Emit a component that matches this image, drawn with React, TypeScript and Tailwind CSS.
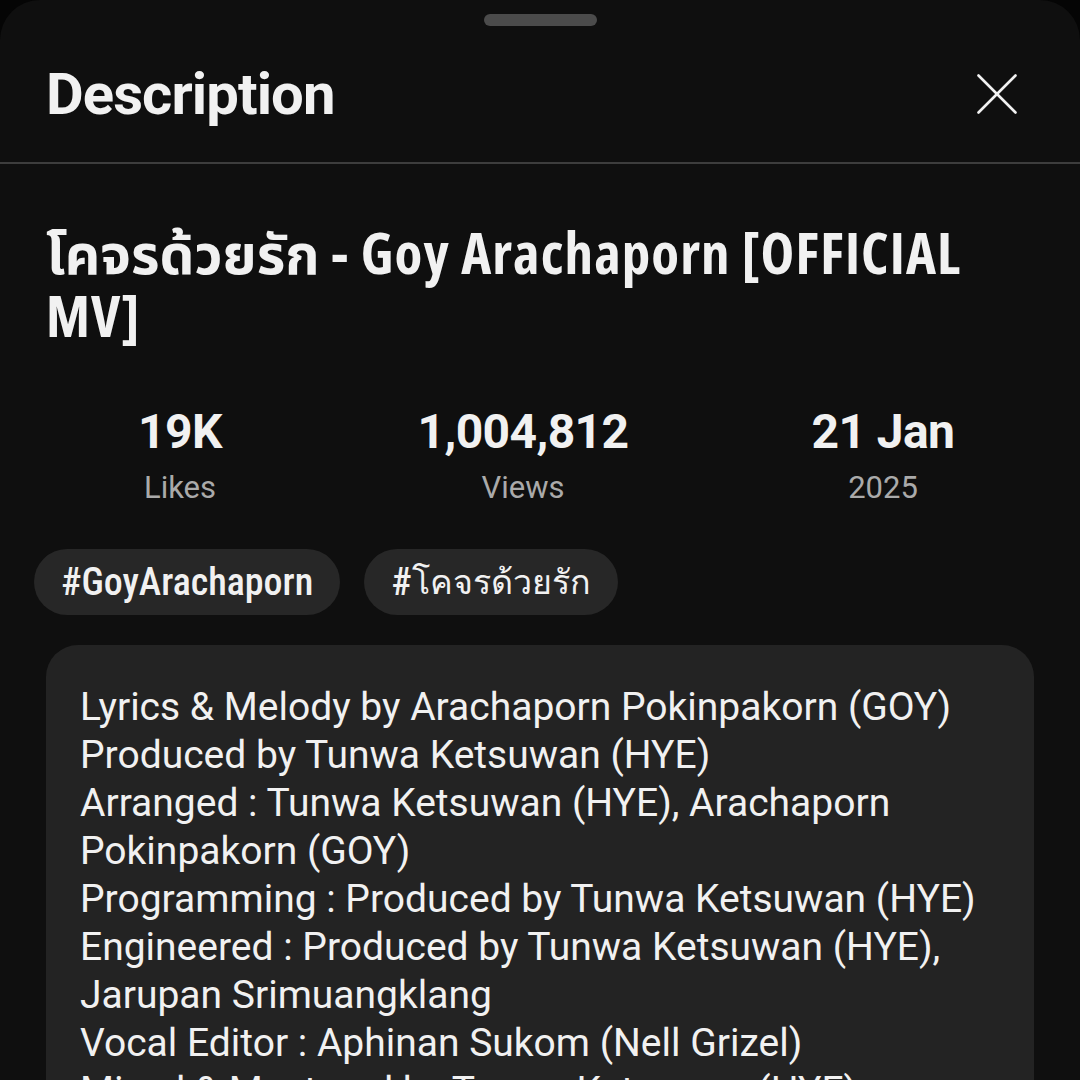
import React from 'react';

const stats = [
  { value: '19K', label: 'Likes' },
  { value: '1,004,812', label: 'Views' },
  { value: '21 Jan', label: '2025' },
];

const credits = [
  'Lyrics & Melody by Arachaporn Pokinpakorn (GOY)',
  'Produced by Tunwa Ketsuwan (HYE)',
  'Arranged : Tunwa Ketsuwan (HYE), Arachaporn Pokinpakorn (GOY)',
  'Programming : Produced by Tunwa Ketsuwan (HYE)',
  'Engineered : Produced by Tunwa Ketsuwan (HYE), Jarupan Srimuangklang',
  'Vocal Editor : Aphinan Sukom (Nell Grizel)',
  'Mixed & Mastered by Tunwa Ketsuwan (HYE)',
];

function Chip({ children }: { children: React.ReactNode }) {
  return (
    <span className="h-[66px] flex items-center px-[27px] rounded-full bg-[#272727] text-[38px] font-medium font-stretch-condensed">
      {children}
    </span>
  );
}

export default function App() {
  return (
    <div className="w-[1080px] h-[1080px] overflow-hidden bg-[#050505] font-['Roboto','Noto_Sans',sans-serif] text-[#f1f1f1]">
      <div className="h-full rounded-t-[40px] bg-[#0f0f0f]">
        {/* Drag handle */}
        <div className="flex justify-center pt-[14px]">
          <div className="w-[113px] h-[12px] rounded-full bg-[#4b4b4b]" />
        </div>

        {/* Header */}
        <div className="flex items-center justify-between h-[136px] px-[46px]">
          <h1 className="text-[58px] leading-none font-bold tracking-[-0.9px]">Description</h1>
          <button className="mr-[17px]">
            <svg width="40" height="40" viewBox="0 0 40 40" stroke="#f1f1f1" strokeWidth="2.6" strokeLinecap="round">
              <line x1="1.5" y1="1.5" x2="38.5" y2="38.5" />
              <line x1="38.5" y1="1.5" x2="1.5" y2="38.5" />
            </svg>
          </button>
        </div>
        <div className="h-[2px] bg-[#3d3d3d]" />

        {/* Title */}
        <h2 className="h-[183px] pl-[46px] pr-[70px] pt-[57px] text-[57px] leading-[63px] font-bold tracking-[1.1px] font-stretch-[84%] font-['Open_Sans','Noto_Sans',sans-serif]">
          <span className="text-[55px] leading-[0] tracking-normal font-stretch-normal font-['Noto_Sans_Thai','Noto_Sans',sans-serif]">โคจรด้วยรัก</span> - Goy Arachaporn [OFFICIAL MV]
        </h2>

        {/* Stats */}
        <div className="grid grid-cols-[360px_326px_1fr] mt-[57px]">
          {stats.map((s) => (
            <div key={s.label} className="flex flex-col items-center">
              <span className="text-[48px] leading-[56px] font-bold tracking-[-0.6px]">{s.value}</span>
              <span className="text-[31px] leading-[36px] mt-[10px] text-[#aaaaaa]">{s.label}</span>
            </div>
          ))}
        </div>

        {/* Hashtags */}
        <div className="flex gap-[24px] px-[34px] mt-[43px]">
          <Chip>#GoyArachaporn</Chip>
          <Chip>
            #<span className="text-[34px] font-normal">โคจรด้วยรัก</span>
          </Chip>
        </div>

        {/* Description body */}
        <div className="mx-[46px] mt-[30px] rounded-[32px] bg-[#232323] px-[34px] pt-[38px] pb-[40px]">
          {credits.map((line) => (
            <p key={line} className="text-[39px] leading-[48px]">
              {line}
            </p>
          ))}
        </div>
      </div>
    </div>
  );
}
